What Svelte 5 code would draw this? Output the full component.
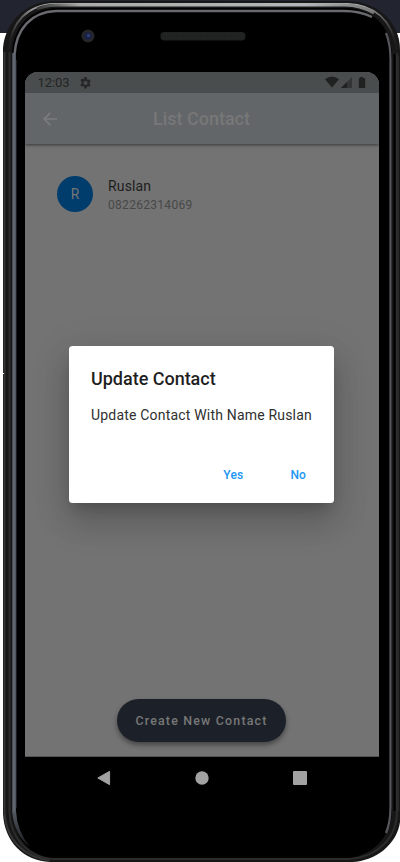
<script>
  const contact = { name: 'Ruslan', phone: '082262314069' };
</script>

<div class="stage">
  <svg class="device" width="400" height="862" viewBox="0 0 400 862" aria-hidden="true">
    <defs>
      <linearGradient id="rim" x1="0" y1="0" x2="0" y2="1">
        <stop offset="0" stop-color="#b5b6b9" />
        <stop offset=".25" stop-color="#666" />
        <stop offset=".7" stop-color="#242424" />
        <stop offset="1" stop-color="#1b1b1b" />
      </linearGradient>
      <linearGradient id="steel">
        <stop offset="0" stop-color="#3c414a" />
        <stop offset=".5" stop-color="#6b707a" />
        <stop offset="1" stop-color="#464b55" />
      </linearGradient>
      <linearGradient id="steel-end" x1="0" y1="0" x2="0" y2="1">
        <stop offset="0" stop-color="#565b64" />
        <stop offset="1" stop-color="#17191c" />
      </linearGradient>
      <linearGradient id="top">
        <stop offset="0" stop-color="#333" />
        <stop offset=".13" stop-color="#aaa" />
        <stop offset=".8" stop-color="#b2b5b7" />
        <stop offset="1" stop-color="#777" />
      </linearGradient>
    </defs>
    <rect width="400" height="33" fill="#22252f" />
    <path d="M3 48C5 23 25 2 53 1H345C378 1 400 22 400 50V822C397 844 376 861 352 862H50C24 861 4 842 3 813Z" fill="#171717" />
    <path d="M4.500 52V810C5 840 25 858 50 860" fill="none" stroke="#353535" stroke-width="2" />
    <path d="M9.500 52V812C10 839 29 857 52 859H349C378 857 397 838 397 811V53" fill="none" stroke="#2c2c2c" stroke-width="2" />
    <path d="M9 50C11 22 27 5 55 4H347C376 5 392 20 397 50" fill="none" stroke="url(#rim)" stroke-width="2" />
    <path d="M37 9Q46 5 57 5H345Q360 5 374 13" fill="none" stroke="url(#top)" stroke-width="3" />
    <path d="M12 53C13 27 30 9 55 8H345C375 9 389 26 392 53V812C390 838 373 855 349 858H54C30 857 14 838 12 811Z" fill="#000" />
    <path d="M14.500 55C16 29 31 12 56 11H344Q360 11 372 17" fill="none" stroke="#696a6f" stroke-width="2.500" />
    <rect x="12" y="53" width="4" height="758" fill="url(#steel)" />
    <path d="M12 811H16Q17 831 30 847Q14 835 12 811Z" fill="url(#steel-end)" />
    <path d="M16.500 60V808" stroke="#1b1f24" />
    <path d="M386 33Q390.500 44 390.500 60V807Q390.500 822 386 833" fill="none" stroke="#56565d" stroke-width="2.200" />
    <path d="M394.500 54V811" stroke="#000" stroke-width="2" />
    <path d="M398.500 56V811" stroke="#292929" stroke-width="1" />
    <rect x="3" y="373" width="1" height="1" fill="#fff" />
    <circle cx="88" cy="36" r="6.500" fill="#252629" />
    <circle cx="88" cy="36" r="3.700" fill="#1b2144" />
    <circle cx="88.500" cy="35.500" r="1.500" fill="#35437c" />
    <rect x="160.500" y="32" width="85" height="8.500" rx="4" fill="#202121" />
    <path d="M163 34.500H244M163 37.500H244" stroke="#292929" stroke-dasharray="1 2" />
  </svg>

  <main class="screen">
    <header>
      <div class="status">
        <span>12:03</span>
        <svg class="gear" width="12" height="12" viewBox="2 2 20 20">
          <path fill="#252827" fill-rule="evenodd" d="M19.400 13l.1-1-.1-1 2.100-1.700-2-3.400-2.500 1-1.700-1L14.900 2h-4l-.4 2.700-1.700 1-2.500-1-2 3.400L6.400 10l-.1 2 .1 1-2.100 1.700 2 3.400 2.500-1 1.700 1 .4 2.900h4l.4-2.700 1.700-1 2.500 1 2-3.400zM12.900 15.500a3.500 3.500 0 110-7 3.500 3.500 0 010 7z" />
        </svg>
        <svg class="signals" width="42" height="13" viewBox="0 0 42 13">
          <path d="M0 3.200Q7-2 14 3.200L7 11.500Z" fill="#202222" />
          <path d="M16 12L27 1V12Z" fill="#323535" />
          <path d="M16 12L22 6V12Z" fill="#202222" />
          <path d="M35 1h3v1h1.500q.7 0 .7.7v8.600q0 .7-.7.7h-5q-.7 0-.7-.7V2.700q0-.7.7-.7H35Z" fill="#202222" />
        </svg>
      </div>
      <div class="bar">
        <svg width="14" height="14" viewBox="0 0 14 14"><path d="M14 7H1.500M7.300 .8L1.100 7l6.200 6.200" fill="none" stroke="#7b7c7c" stroke-width="1.700" /></svg>
        <h1>List Contact</h1>
      </div>
    </header>
    <section class="content">
      <div class="contact">
        <div class="avatar">{contact.name[0]}</div>
        <div class="details">
          <div class="name">{contact.name}</div>
          <div class="phone">{contact.phone}</div>
        </div>
      </div>
      <button class="create">Create New Contact</button>
    </section>
  </main>

  <nav aria-label="Android navigation">
    <svg width="14" height="16" viewBox="0 0 14 16"><path d="M.8 8L12.600 1.300V14.700Z" fill="#a2a2a2" stroke="#a2a2a2" stroke-linejoin="round" /></svg>
    <svg width="14" height="14" viewBox="0 0 14 14"><circle cx="7" cy="7" r="6.700" fill="#a2a2a2" /></svg>
    <svg width="14" height="14" viewBox="0 0 14 14"><rect width="14" height="14" rx="1" fill="#a2a2a2" /></svg>
  </nav>

  <div class="dialog" role="dialog" aria-labelledby="dialog-title">
    <h2 id="dialog-title">Update Contact</h2>
    <p>Update Contact With Name {contact.name}</p>
    <div class="actions"><button>Yes</button><button>No</button></div>
  </div>
</div>

<style>
  :global(body) { margin: 0; background: #fff; }
  .stage { position: relative; box-sizing: border-box; width: 400px; height: 862px; padding: 72px 21px 0 25px; overflow: hidden; font-family: Roboto, "Liberation Sans", sans-serif; }
  .device { position: absolute; left: 0; top: 0; }
  .screen { position: relative; display: flex; flex-direction: column; width: 354px; height: 685px; overflow: hidden; background: #737373; border-radius: 13px 13px 0 0; box-shadow: inset 0 -1px #555; }
  header { position: relative; background: #626669; box-shadow: 0 1px 3px #0008; }
  .status { display: flex; align-items: center; height: 21px; box-sizing: border-box; padding: 0 12px 0 12.500px; background: #4a4d4d; color: #222525; font-size: 13px; line-height: 21px; letter-spacing: -.08px; }
  .gear { margin-left: 10px; }
  .signals { margin-left: auto; }
  .bar { display: flex; align-items: center; height: 51px; padding-left: 18px; }
  h1 { width: 289px; margin: 0; text-align: center; color: #777878; font-size: 18px; line-height: 24px; font-weight: 500; letter-spacing: -.02px; }
  .content { display: flex; flex: 1; flex-direction: column; justify-content: space-between; align-items: center; padding: 32px 0 15px; }
  .contact { display: flex; align-self: flex-start; align-items: flex-start; gap: 15px; padding-left: 32px; }
  .avatar { display: grid; place-items: center; width: 36px; height: 36px; border-radius: 50%; background: #003d6d; color: #777; font-size: 13.800px; }
  .details { margin-top: 1px; }
  .name { color: #1d1d1d; font-size: 14px; line-height: 18px; letter-spacing: .15px; }
  .phone { margin-top: 1px; color: #484848; font-size: 12px; line-height: 18px; letter-spacing: .3px; }
  button { margin: 0; border: 0; background: none; font-family: inherit; }
  .create { width: 169px; height: 43px; margin-right: 1px; padding: 0; border-radius: 22px; background: #1c2129; color: #777; font-size: 12.400px; font-weight: 500; letter-spacing: 1.200px; white-space: nowrap; box-shadow: 0 3px 5px #0006; }
  nav { position: relative; display: flex; align-items: center; justify-content: space-between; height: 42px; padding: 0 72.500px 0 72px; }
  .dialog { position: absolute; left: 69px; top: 346px; box-sizing: border-box; width: 265px; height: 157px; display: flex; flex-direction: column; padding: 21px 20px 13px 22px; border-radius: 3.500px; background: #fff; box-shadow: 0 9px 13px -5px #0003, 0 20px 32px 3px #00000024, 0 7px 38px 7px #00000010; }
  h2 { margin: 0; color: #1f1f1f; font-size: 18px; line-height: 24px; font-weight: 500; letter-spacing: -.02px; white-space: nowrap; }
  p { margin: 14px 0 0; color: #303030; font-size: 14px; line-height: 20px; letter-spacing: .19px; white-space: nowrap; }
  .actions { display: flex; justify-content: flex-end; gap: 47px; margin-top: auto; padding-right: 8px; }
  .actions button { padding: 0; color: #2196f3; font-size: 12px; line-height: 30px; font-weight: 500; letter-spacing: .15px; }
</style>
